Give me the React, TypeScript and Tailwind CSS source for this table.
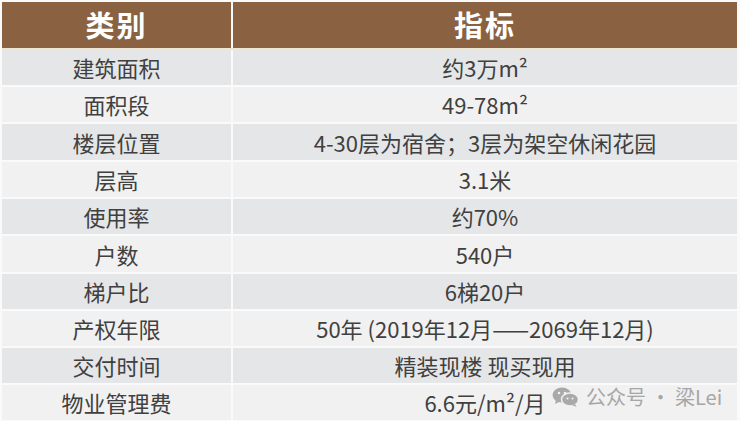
const rows: [string, string][] = [
  ['建筑面积', '约3万m²'],
  ['面积段', '49-78m²'],
  ['楼层位置', '4-30层为宿舍；3层为架空休闲花园'],
  ['层高', '3.1米'],
  ['使用率', '约70%'],
  ['户数', '540户'],
  ['梯户比', '6梯20户'],
  ['产权年限', '50年 (2019年12月——2069年12月)'],
  ['交付时间', '精装现楼 现买现用'],
  ['物业管理费', '6.6元/m²/月'],
];

const WeChatIcon = () => (
  <svg width="28" height="20" viewBox="0 0 28 20" fill="none">
    <ellipse cx="10" cy="8" rx="9.5" ry="7.5" fill="#a9a9a9" />
    <path d="M4 13 L3 17 L8 14.5 Z" fill="#a9a9a9" />
    <ellipse cx="18" cy="12.5" rx="8.5" ry="6.5" fill="#a9a9a9" stroke="#f1f1f1" strokeWidth="1.5" />
    <path d="M23 17 L24.5 19.8 L20 18.2 Z" fill="#a9a9a9" />
    <circle cx="7" cy="6" r="1.3" fill="#f1f1f1" />
    <circle cx="13" cy="6" r="1.3" fill="#f1f1f1" />
    <circle cx="15.5" cy="11.5" r="1.1" fill="#f1f1f1" />
    <circle cx="20.5" cy="11.5" r="1.1" fill="#f1f1f1" />
  </svg>
);

const App = () => {
  return (
    <div
      className="relative w-[740px] h-[421px] bg-[#fafafa] pl-[2px] pr-[3px] pt-[2px] overflow-hidden"
      style={{ fontFamily: '"Noto Sans CJK SC", "Noto Sans", sans-serif' }}
    >
      <div className="grid grid-cols-[229px_1fr] gap-x-[2px]">
        <div className="h-[46px] bg-[#8a6242] flex items-center justify-center text-white font-bold text-[29px] tracking-[2px]">
          类别
        </div>
        <div className="h-[46px] bg-[#8a6242] flex items-center justify-center text-white font-bold text-[29px] tracking-[2px]">
          指标
        </div>
        <div className="col-span-2 h-[2px] bg-[#efe6d2]"></div>
        {rows.map(([k, v], i) => {
          const bg = i % 2 === 0 ? 'bg-[#e5e6e8]' : 'bg-[#f1f1f1]';
          const h = i === 2 || i === 5 ? 'h-[36px]' : 'h-[35px]';
          return (
            <div key={k} className="contents">
              <div className={`${bg} ${h} flex items-center justify-center text-[22px] text-[#404040]`}>{k}</div>
              <div className={`${bg} ${h} flex items-center justify-center text-[22px] text-[#404040]`}>{v}</div>
              <div className="col-span-2 h-[2px]"></div>
            </div>
          );
        })}
      </div>
      <div className="absolute left-[552px] top-[382px] flex items-center gap-[6px] text-[20px] text-[#a6a6a6]">
        <WeChatIcon />
        <span>公众号 · 梁Lei</span>
      </div>
    </div>
  );
};

export default App;
